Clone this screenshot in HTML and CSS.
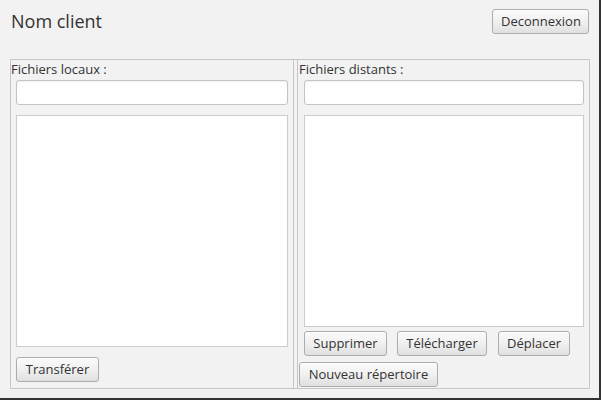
FILE: index.html
```html
<!DOCTYPE html>
<html lang="fr">
<head>
<meta charset="utf-8">
<title>Nom client</title>
<link rel="stylesheet" href="styles.css">
</head>
<body>
<div class="app">
  <header class="header">
    <h1 class="title">Nom client</h1>
    <button class="btn btn-logout">Deconnexion</button>
  </header>
  <div class="split">
    <section class="pane pane-left">
      <label class="pane-label">Fichiers locaux :</label>
      <input class="field" type="text">
      <div class="list"></div>
      <div class="actions">
        <button class="btn btn-transfer">Transférer</button>
      </div>
    </section>
    <div class="divider"></div>
    <section class="pane pane-right">
      <label class="pane-label">Fichiers distants :</label>
      <input class="field" type="text">
      <div class="list"></div>
      <div class="row-actions">
        <button class="btn btn-delete">Supprimer</button>
        <button class="btn btn-download">Télécharger</button>
        <button class="btn btn-move">Déplacer</button>
      </div>
      <div class="row-new">
        <button class="btn btn-newdir">Nouveau répertoire</button>
      </div>
    </section>
  </div>
</div>
</body>
</html>
```

FILE: styles.css
```css
html {
  background: #333333;
}
body {
  margin: 0;
  width: 601px;
  height: 400px;
  overflow: hidden;
  font-family: "Open Sans", "Noto Sans", sans-serif;
  font-size: 13px;
  color: #333333;
}
.app {
  width: 599px;
  height: 398px;
  background: #f2f2f2;
  box-sizing: border-box;
  padding: 0 9px 9px 10px;
  display: flex;
  flex-direction: column;
}
.header {
  height: 59px;
  flex: none;
  display: flex;
  justify-content: space-between;
  align-items: flex-start;
  padding-top: 9px;
  box-sizing: border-box;
}
.title {
  margin: 0 0 0 1px;
  font-size: 18px;
  font-weight: normal;
  line-height: 24px;
  color: #333333;
}
.btn {
  font-family: "Open Sans", "Noto Sans", sans-serif;
  font-size: 13px;
  color: #333333;
  height: 25px;
  padding: 0 8px;
  box-sizing: border-box;
  border: 1px solid #adadad;
  border-radius: 3px;
  background: linear-gradient(to bottom, #fbfbfb 0%, #f0f0f0 50%, #e0e0e0 100%);
  box-shadow: inset 0 1px 0 rgba(255,255,255,0.8);
  line-height: 21px;
  cursor: default;
}
.btn-logout { width: 97px; margin-right: 1px; }
.btn-transfer { width: 83px; }
.btn-delete { width: 83px; }
.btn-download { width: 90px; }
.btn-move { width: 72px; }
.btn-newdir { width: 139px; }

.split {
  flex: 1;
  display: flex;
  border: 1px solid #c6c6c6;
  min-height: 0;
}
.pane {
  display: flex;
  flex-direction: column;
  min-width: 0;
}
.pane-left {
  width: 282px;
  border-right: 1px solid #c6c6c6;
  padding-bottom: 6px;
}
.divider {
  width: 3px;
  flex: none;
}
.pane-right {
  flex: 1;
  border-left: 1px solid #c6c6c6;
  padding-bottom: 1px;
}
.pane-label {
  display: block;
  height: 18px;
  line-height: 18px;
  margin-bottom: 2px;
  white-space: nowrap;
}
.pane-right .pane-label {
  padding-left: 1px;
}
.field {
  display: block;
  height: 25px;
  box-sizing: border-box;
  border: 1px solid #c4c4c4;
  border-radius: 3px;
  background: #ffffff;
  box-shadow: inset 0 1px 2px rgba(0,0,0,0.06);
  padding: 0 6px;
  font: inherit;
  outline: none;
}
.pane-left .field,
.pane-left .list {
  margin-left: 5px;
  margin-right: 5px;
}
.pane-right .field,
.pane-right .list {
  margin-left: 6px;
  margin-right: 5px;
}
.list {
  margin-top: 10px;
  flex: 1;
  background: #ffffff;
  border: 1px solid #cccccc;
}
.actions {
  margin-top: 10px;
  padding-left: 5px;
}
.row-actions {
  margin-top: 4px;
  padding-left: 6px;
  display: flex;
  gap: 10px;
}
.row-actions .btn-move {
  margin-left: 1px;
}
.row-new {
  margin-top: 6px;
  padding-left: 1px;
}
```
